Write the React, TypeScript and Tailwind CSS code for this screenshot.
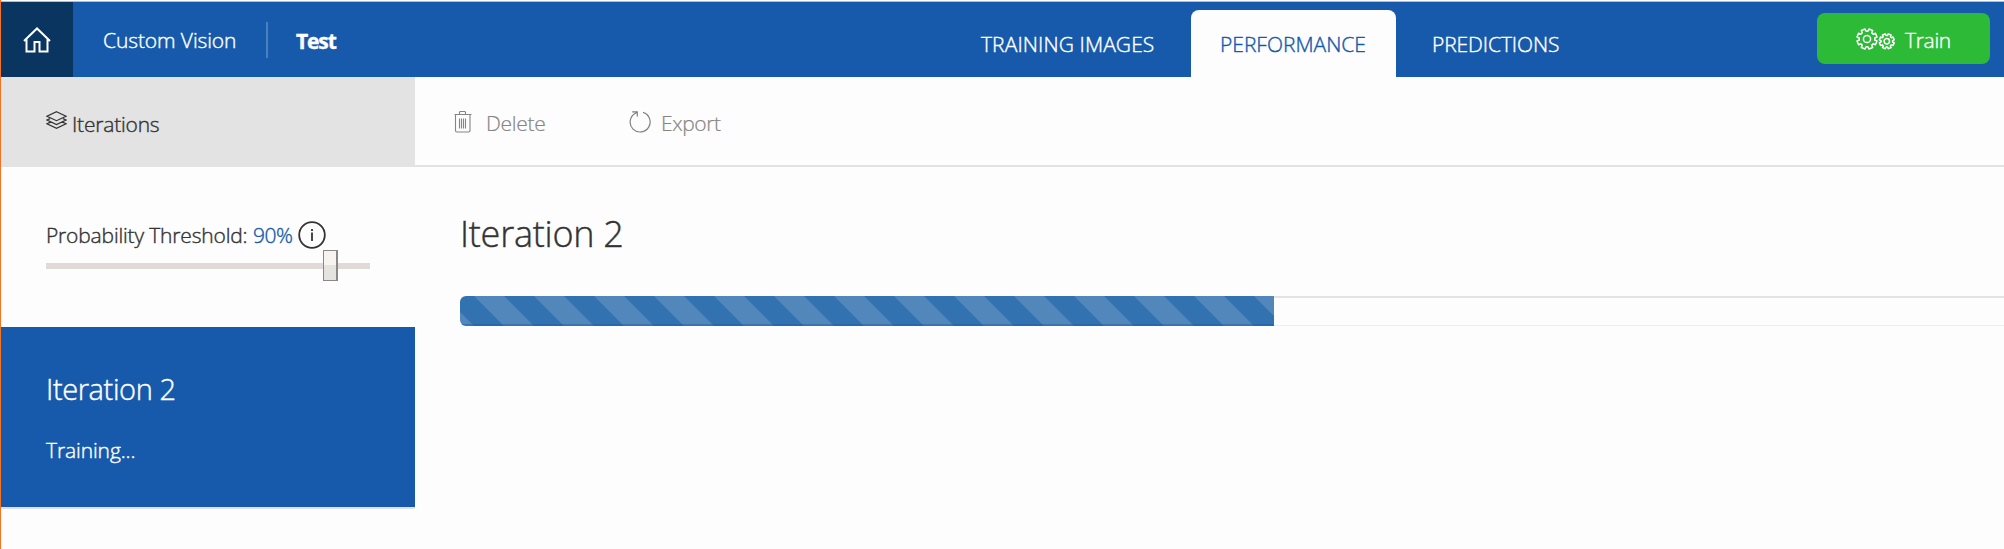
import type { ReactNode } from "react";

function HomeIcon() {
  return (
    <svg className="h-[26px] w-[28px]" viewBox="0 0 28 26" fill="none" stroke="#fff" strokeWidth="2">
      <path d="M1 14 14 1.5 27 14M3.5 12V24.5H11.5V15H16.5V24.5H24.5V12" />
    </svg>
  );
}

function LayersIcon() {
  return (
    <svg className="-mt-[4px] h-[18px] w-[21px]" viewBox="0 0 21 18" fill="none" stroke="#333" strokeWidth="1.2">
      <path d="M10.5 .7 20 5.2 10.5 9.7 1 5.2ZM4 7.6 1 9 10.5 13.5 20 9 17 7.6M4 11.4 1 12.8 10.5 17.3 20 12.8 17 11.4" />
    </svg>
  );
}

function TrashIcon() {
  return (
    <svg className="mt-px h-[22px] w-[18px]" viewBox="0 0 18 22" fill="none" stroke="#858585" strokeWidth="1.1">
      <path d="M.5 3.5H17.5M5.5 3.5V1.5Q5.5 .5 6.5 .5H10.5Q11.5 .5 11.5 1.5V3.5M1.5 3.5V19.5Q1.5 21 3 21H14.5Q16 21 16 19.5V3.5M5.5 7.5V17.5M7.5 7.5V17.5M9.5 7.5V17.5M11.5 7.5V17.5" />
    </svg>
  );
}

function RefreshIcon() {
  return (
    <svg className="mt-px h-[22px] w-[22px]" viewBox="0 0 22 22" fill="none" stroke="#808080" strokeWidth="1.2">
      <path d="M14 1.4A10 10 0 1 1 6 2.4L8 1.2M3.2 .8H8.3V5.6" />
    </svg>
  );
}

function gearPath(c: number, outer: number, inner: number) {
  const points: string[] = [];
  const step = Math.PI / 4;
  for (let i = 0; i < 8; i++) {
    const a = (i + 0.5) * step;
    [
      [-0.27, inner],
      [-0.2, outer],
      [0.2, outer],
      [0.27, inner],
    ].forEach(([d, r]) => points.push(`${(c + r * Math.cos(a + d)).toFixed(2)} ${(c + r * Math.sin(a + d)).toFixed(2)}`));
  }
  return `M${points.join("L")}Z`;
}

function GearsIcon() {
  return (
    <svg className="h-[22px] w-[39px]" viewBox="0 0 39 22" fill="none" stroke="#fff" strokeWidth="1.5" strokeLinejoin="round">
      <path d={gearPath(11, 10.2, 7.8)} />
      <circle cx="11" cy="11" r="3.6" />
      <g transform="translate(22.8 5.3)">
        <path d={gearPath(8, 7.6, 5.8)} />
        <circle cx="8" cy="8" r="2.7" />
      </g>
    </svg>
  );
}

function Tab({ children, className }: { children: ReactNode; className: string }) {
  return <div className={`flex h-[67px] items-center whitespace-nowrap rounded-t-lg ${className}`}>{children}</div>;
}

export default function App() {
  return (
    <div className="flex h-[549px] w-[2004px] flex-col overflow-hidden border-l border-[#f57324] bg-[#fdfdfd] font-['Open_Sans',sans-serif] text-[21px] font-light leading-[28px] tracking-[-0.1px] text-[#333] [-webkit-text-stroke:0.4px]">
      <div className="h-px shrink-0 bg-[#fdfdfd]" />
      <div className="h-px shrink-0 bg-[#b9bcc0]" />
      <header className="flex h-[75px] shrink-0 bg-[#175aab] text-white">
        <div className="flex w-[72px] items-center justify-center bg-[#0a3561]">
          <HomeIcon />
        </div>
        <div className="flex w-[193px] items-center pl-[30px]">
          <span className="whitespace-nowrap">Custom Vision</span>
        </div>
        <div className="mt-[20px] h-[36px] w-[2px] bg-[#4a80c0]" />
        <div className="flex w-[684px] items-center pl-[28px] pt-[2px] font-bold tracking-[-1.1px]">Test</div>
        <nav className="flex items-end">
          <Tab className="w-[239px] pl-[29px] tracking-[0.1px]">TRAINING IMAGES</Tab>
          <Tab className="w-[205px] bg-[#fdfdfd] pl-[29px] tracking-[0px] text-[#175aab]">PERFORMANCE</Tab>
          <Tab className="w-[200px] pl-[36px]">PREDICTIONS</Tab>
        </nav>
        <div className="ml-auto flex items-center pb-[2px] pr-[14px]">
          <button className="flex h-[51px] w-[173px] items-center rounded-lg bg-[#2cba37] pl-[39px]">
            <GearsIcon />
            <span className="ml-[10px] pt-[2px] tracking-[-0.3px]">Train</span>
          </button>
        </div>
      </header>
      <div className="flex min-h-0 flex-1">
        <aside className="w-[414px] shrink-0">
          <div className="flex h-[90px] items-center bg-[#e3e3e3] pl-[45px]">
            <LayersIcon />
            <span className="ml-[5px] pt-[3px] tracking-[-0.2px]">Iterations</span>
          </div>
          <div className="h-[160px] pl-[45px] pt-[53px]">
            <div className="flex h-[30px] items-center whitespace-nowrap">
              <span className="w-[201px] tracking-[-0.17px]">Probability Threshold:</span>
              <span className="ml-[6px] w-[42px] tracking-[-0.5px] text-[#175aab]">90%</span>
              <svg className="ml-[3px] h-[28px] w-[28px]" viewBox="0 0 28 28" fill="none" stroke="#333" strokeWidth="1.8">
                <circle cx="14" cy="14" r="12.8" />
                <path d="M14 11.5V20M14 8V10" />
              </svg>
            </div>
            <div className="flex h-[31px] w-[324px] items-center">
              <div className="h-[6px] w-[277px] bg-[#e1dad7]" />
              <div className="h-[31px] w-[15px] border border-r-2 border-[#8a8886] bg-linear-to-b from-[#f7f3ee] from-50% to-[#e4e3e0] to-50%" />
              <div className="h-[6px] flex-1 bg-[#e1dad7]" />
            </div>
          </div>
          <div className="h-[182px] border-b-2 border-[#e0e0e0] bg-[#175aab] pl-[45px] pt-[42px] text-white">
            <div className="text-[29px] leading-[40px] tracking-[-0.4px]">Iteration 2</div>
            <div className="mt-[27px]">Training...</div>
          </div>
        </aside>
        <main className="min-w-0 flex-1">
          <div className="flex h-[90px] items-center border-b-2 border-[#e3e3e3] pl-[39px] text-[#858585] [-webkit-text-stroke:0.2px]">
            <TrashIcon />
            <span className="ml-[14px] w-[143px] pt-[4px] tracking-[-0.3px]">Delete</span>
            <RefreshIcon />
            <span className="ml-[10px] pt-[4px] tracking-[-0.4px]">Export</span>
          </div>
          <div className="pl-[45px] pt-[42px]">
            <h1 className="text-[36px] leading-[50px] tracking-[-0.25px]">Iteration 2</h1>
            <div className="mt-[37px] flex h-[30px] overflow-hidden">
              <svg className="h-[30px] w-[814px] shrink-0 rounded-l-md" viewBox="0 0 814 30">
                <defs>
                  <pattern id="stripes" width="60" height="30" x="-1" y="0" patternUnits="userSpaceOnUse">
                    <rect width="60" height="30" fill="#3272b1" />
                    <path d="M15 0H45L75 30H45ZM-45 0H-15L15 30H-15Z" fill="#5187bb" />
                  </pattern>
                </defs>
                <rect width="814" height="30" fill="url(#stripes)" />
                <rect y="28" width="814" height="2" fill="#175aab" opacity=".4" />
              </svg>
              <div className="flex-1 border-b border-t-2 border-b-[#eeeeee] border-t-[#e3e3e3]" />
            </div>
          </div>
        </main>
      </div>
    </div>
  );
}
